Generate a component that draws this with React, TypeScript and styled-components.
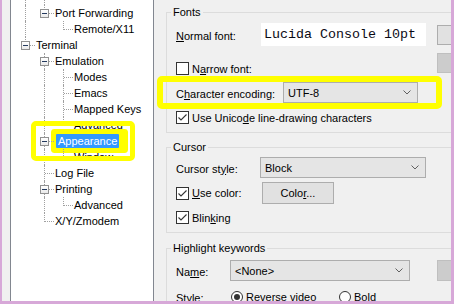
import React from 'react';
import styled, { createGlobalStyle, css } from 'styled-components';

const GlobalStyle = createGlobalStyle`
  html, body {
    margin: 0;
    padding: 0;
    background: #ffffff;
  }
  body {
    font-family: "Liberation Sans", Arial, sans-serif;
  }
  * {
    box-sizing: border-box;
  }
`;

type GuideKind = 'I' | 'T' | 'L' | '_';

interface TreeNode {
  guides: GuideKind[];
  text?: string;
  box?: boolean;
  selected?: boolean;
  height?: number;
}

const treeRows: TreeNode[] = [
  { guides: ['I', 'I'], height: 5 },
  { guides: ['I', 'L'], text: 'Port Forwarding', box: true },
  { guides: ['I', '_', 'L'], text: 'Remote/X11' },
  { guides: ['L'], text: 'Terminal', box: true },
  { guides: ['_', 'T'], text: 'Emulation', box: true },
  { guides: ['_', 'I', 'T'], text: 'Modes' },
  { guides: ['_', 'I', 'T'], text: 'Emacs' },
  { guides: ['_', 'I', 'T'], text: 'Mapped Keys' },
  { guides: ['_', 'I', 'L'], text: 'Advanced' },
  { guides: ['_', 'T'], text: 'Appearance', box: true, selected: true },
  { guides: ['_', 'I', 'L'], text: 'Window' },
  { guides: ['_', 'T'], text: 'Log File' },
  { guides: ['_', 'T'], text: 'Printing', box: true },
  { guides: ['_', 'I', 'L'], text: 'Advanced' },
  { guides: ['_', 'L'], text: 'X/Y/Zmodem' },
];

const Window = styled.div`
  width: 454px;
  height: 304px;
  display: flex;
  border-style: solid;
  border-color: #d7a8d8;
  border-width: 0 3px 3px 2px;
  background: #f0f0f0;
  overflow: hidden;
`;

const Gutter = styled.div`
  width: 8px;
  flex: none;
`;

const Tree = styled.div`
  position: relative;
  width: 144px;
  flex: none;
  background: #ffffff;
  border-left: 1px solid #828790;
  border-right: 1px solid #828790;
  padding-left: 5px;
  font-size: 11px;
  color: #000000;
`;

const TreeRow = styled.div<{ $h: number }>`
  display: flex;
  align-items: center;
  height: ${p => p.$h}px;
  white-space: nowrap;
`;

const dotted = '1px dotted #a0a0a0';

const Guide = styled.span<{ $kind: GuideKind }>`
  position: relative;
  align-self: stretch;
  width: 19px;
  flex: none;

  &::before {
    content: '';
    position: absolute;
    left: 9px;
    top: 0;
    height: ${p => (p.$kind === 'L' ? '9px' : p.$kind === '_' ? '0' : '100%')};
    border-left: ${p => (p.$kind === '_' ? 'none' : dotted)};
  }

  &::after {
    content: '';
    position: absolute;
    left: 10px;
    top: 8px;
    width: 9px;
    border-top: ${p => (p.$kind === 'T' || p.$kind === 'L' ? dotted : 'none')};
  }
`;

const Expander = styled.span`
  position: absolute;
  z-index: 1;
  left: 5px;
  top: 4px;
  width: 9px;
  height: 9px;
  border: 1px solid #919191;
  background: linear-gradient(#ffffff, #eaeaea);

  &::before {
    content: '';
    position: absolute;
    left: 1px;
    top: 3px;
    width: 5px;
    height: 1px;
    background: #243a5e;
  }
`;

const NodeLabel = styled.span<{ $selected?: boolean }>`
  padding: 0 1px;
  line-height: 14px;

  ${p =>
    p.$selected &&
    css`
      margin-left: 2px;
      padding: 0 2px;
      background: #3399ff;
      color: #ffffff;
      border-radius: 1px;
      box-shadow: 0 0 0 5px #ffff00, 4px 0 0 5px #ffff00;
    `}
`;

const TreeMark = styled.div`
  position: absolute;
  left: 20px;
  top: 121px;
  width: 104px;
  height: 40px;
  border: 5px solid #ffff00;
  border-radius: 5px;
  pointer-events: none;
`;

const Panel = styled.div`
  position: relative;
  flex: 1;
  min-width: 0;
  overflow: hidden;
  padding: 12px 0 0 12px;
  font-size: 11px;
  color: #000000;
`;

const Group = styled.section<{ $gap?: number }>`
  width: 355px;
  margin-top: ${p => p.$gap ?? 0}px;
  border: 1px solid #dcdcdc;
  padding: 0 8px 8px 9px;
`;

const Caption = styled.div`
  width: fit-content;
  margin: -8px 0 0 -5px;
  padding: 0 2px;
  line-height: 14px;
  background: #f0f0f0;
`;

const FieldRow = styled.div<{ $top: number; $h: number; $align?: string }>`
  display: flex;
  align-items: ${p => p.$align ?? 'center'};
  margin-top: ${p => p.$top}px;
  height: ${p => p.$h}px;
  white-space: nowrap;
`;

const FieldLabel = styled.span<{ $w: number }>`
  width: ${p => p.$w}px;
  flex: none;
  padding-top: 2px;
`;

const FontBox = styled.div`
  width: 165px;
  height: 23px;
  display: flex;
  align-items: center;
  padding: 0 0 1px 3px;
  background: #ffffff;
  font-family: "Liberation Mono", "Courier New", monospace;
  font-size: 13.33px;
  color: #0a0a14;
`;

// side buttons run past the panel's right edge; only their left ends show
const Button = styled.button<{ $w: number; $h: number; $disabled?: boolean; $push?: boolean }>`
  appearance: none;
  flex: none;
  width: ${p => p.$w}px;
  height: ${p => p.$h}px;
  margin: 0 0 0 ${p => (p.$push ? 'auto' : '0')};
  padding: 0;
  font: inherit;
  color: ${p => (p.$disabled ? '#838383' : '#000000')};
  background: ${p => (p.$disabled ? '#cccccc' : '#e1e1e1')};
  border: 1px solid ${p => (p.$disabled ? '#bfbfbf' : '#adadad')};
  border-radius: 0;
`;

const Select = styled.div<{ $w: number }>`
  width: ${p => p.$w}px;
  height: 21px;
  flex: none;
  display: flex;
  align-items: center;
  justify-content: space-between;
  padding: 0 6px 0 4px;
  background: #e5e5e5;
  border: 1px solid #adadad;
`;

const CheckField = styled.label<{ $w?: number; $dy?: number }>`
  display: flex;
  align-items: center;
  gap: 3px;
  width: ${p => (p.$w ? `${p.$w}px` : 'auto')};
  flex: none;
  margin-top: ${p => p.$dy ?? 0}px;
`;

const Box = styled.span`
  width: 13px;
  height: 13px;
  flex: none;
  display: flex;
  align-items: center;
  justify-content: center;
  border: 1px solid #333333;
  background: #ffffff;
`;

const Radio = styled.span<{ $on?: boolean }>`
  width: 12px;
  height: 12px;
  flex: none;
  border-radius: 50%;
  border: 1px solid #333333;
  background: #ffffff;
  display: flex;
  align-items: center;
  justify-content: center;

  &::after {
    content: '';
    width: 6px;
    height: 6px;
    border-radius: 50%;
    background: ${p => (p.$on ? '#333333' : 'transparent')};
  }
`;

const RadioItem = styled.label<{ $w?: number }>`
  display: flex;
  align-items: center;
  gap: 3px;
  width: ${p => (p.$w ? `${p.$w}px` : 'auto')};
  flex: none;
`;

const PanelMark = styled.div`
  position: absolute;
  left: 3px;
  top: 76px;
  width: 285px;
  height: 33px;
  border: 6px solid #ffff00;
  border-radius: 5px;
  pointer-events: none;
`;

const Chevron = () => (
  <svg width="8" height="5" viewBox="0 0 8 5">
    <polyline points="0.5,0.5 4,4 7.5,0.5" fill="none" stroke="#606060" strokeWidth="1" />
  </svg>
);

const Check = ({ on }: { on?: boolean }) => (
  <Box>
    {on && (
      <svg width="11" height="11" viewBox="0 0 11 11">
        <polyline points="1.5,5.5 4,8 9.5,2.5" fill="none" stroke="#333333" strokeWidth="1.1" />
      </svg>
    )}
  </Box>
);

const App: React.FC = () => (
  <>
    <GlobalStyle />
    <Window>
      <Gutter />
      <Tree>
        {treeRows.map((row, i) => (
          <TreeRow key={i} $h={row.height ?? 16}>
            {row.guides.map((g, j) => (
              <Guide key={j} $kind={g}>
                {row.box && j === row.guides.length - 1 && <Expander />}
              </Guide>
            ))}
            {row.text && <NodeLabel $selected={row.selected}>{row.text}</NodeLabel>}
          </TreeRow>
        ))}
        <TreeMark />
      </Tree>

      <Panel>
        <Group>
          <Caption>Fonts</Caption>
          <FieldRow $top={4} $h={23}>
            <FieldLabel $w={85}>
              <u>N</u>ormal font:
            </FieldLabel>
            <FontBox>Lucida Console 10pt</FontBox>
            <Button $w={75} $h={20} $push aria-label="Font" />
          </FieldRow>
          <FieldRow $top={7} $h={23} $align="flex-start">
            <CheckField $dy={9}>
              <Check />
              <span>
                N<u>a</u>rrow font:
              </span>
            </CheckField>
            <Button $w={75} $h={20} $push $disabled aria-label="Narrow font" />
          </FieldRow>
          <FieldRow $top={6} $h={21}>
            <FieldLabel $w={107}>
              C<u>h</u>aracter encoding:
            </FieldLabel>
            <Select $w={135}>
              <span>UTF-8</span>
              <Chevron />
            </Select>
          </FieldRow>
          <FieldRow $top={8} $h={13}>
            <CheckField>
              <Check on />
              <span>
                Use Unico<u>d</u>e line-drawing characters
              </span>
            </CheckField>
          </FieldRow>
        </Group>

        <Group $gap={14}>
          <Caption>Cursor</Caption>
          <FieldRow $top={3} $h={21}>
            <FieldLabel $w={84}>
              Cursor st<u>y</u>le:
            </FieldLabel>
            <Select $w={166}>
              <span>Block</span>
              <Chevron />
            </Select>
          </FieldRow>
          <FieldRow $top={4} $h={22}>
            <CheckField $w={86}>
              <Check on />
              <span>
                <u>U</u>se color:
              </span>
            </CheckField>
            <Button $w={72} $h={22}>
              Colo<u>r</u>...
            </Button>
          </FieldRow>
          <FieldRow $top={7} $h={13}>
            <CheckField>
              <Check on />
              <span>
                Blin<u>k</u>ing
              </span>
            </CheckField>
          </FieldRow>
        </Group>

        <Group $gap={15}>
          <Caption>Highlight keywords</Caption>
          <FieldRow $top={5} $h={21}>
            <FieldLabel $w={54}>
              Na<u>m</u>e:
            </FieldLabel>
            <Select $w={180}>
              <span>&lt;None&gt;</span>
              <Chevron />
            </Select>
            <Button $w={75} $h={21} $push $disabled aria-label="Edit" />
          </FieldRow>
          <FieldRow $top={9} $h={13}>
            <FieldLabel $w={55}>Style:</FieldLabel>
            <RadioItem $w={108}>
              <Radio $on />
              <span>Reverse video</span>
            </RadioItem>
            <RadioItem>
              <Radio />
              <span>Bold</span>
            </RadioItem>
          </FieldRow>
        </Group>
        <PanelMark />
      </Panel>
    </Window>
  </>
);

export default App;
